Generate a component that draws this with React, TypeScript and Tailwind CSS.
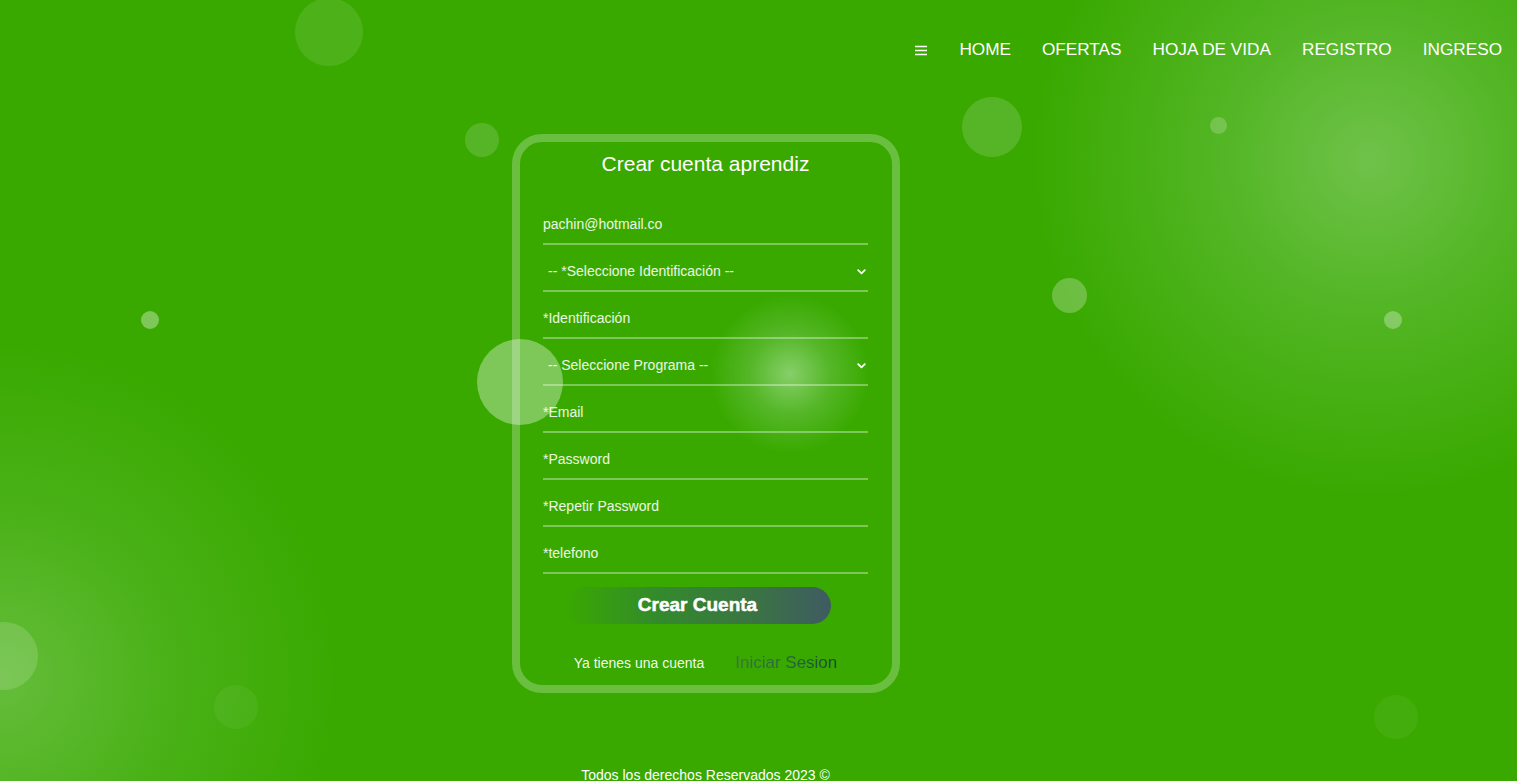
import React from 'react';

const bubbles = [
  'left-[295px] top-[-2px] w-[68px] h-[68px] bg-white/10',
  'left-[465px] top-[123px] w-[34px] h-[34px] bg-white/15',
  'left-[962px] top-[97px] w-[60px] h-[60px] bg-white/15',
  'left-[1210px] top-[117px] w-[17px] h-[17px] bg-white/20',
  'left-[1052px] top-[278px] w-[35px] h-[35px] bg-white/25',
  'left-[141px] top-[311px] w-[18px] h-[18px] bg-white/35',
  'left-[1384px] top-[311px] w-[18px] h-[18px] bg-white/30',
  'left-[477px] top-[339px] w-[86px] h-[86px] bg-white/35',
  'left-[-30px] top-[622px] w-[68px] h-[68px] bg-white/15',
  'left-[214px] top-[685px] w-[44px] h-[44px] bg-white/5',
  'left-[1374px] top-[695px] w-[44px] h-[44px] bg-white/5',
];

const fields = [
  { kind: 'input', value: 'pachin@hotmail.co' },
  { kind: 'select', label: '-- *Seleccione Identificación --' },
  { kind: 'input', label: '*Identificación' },
  { kind: 'select', label: '-- Seleccione Programa --' },
  { kind: 'input', label: '*Email' },
  { kind: 'input', label: '*Password' },
  { kind: 'input', label: '*Repetir Password' },
  { kind: 'input', label: '*telefono' },
];

const Chevron = () => (
  <svg width="9" height="6" viewBox="0 0 9 6" fill="none">
    <path d="M1.2 1.2 L4.5 4.4 L7.8 1.2" stroke="white" strokeWidth="1.8" strokeLinecap="round" strokeLinejoin="round" />
  </svg>
);

export default function App() {
  return (
    <div className="relative min-h-[781px] w-full overflow-hidden bg-[#39a900] font-['Liberation_Sans',Arial,sans-serif] text-white">
      {/* background glows */}
      <div className="pointer-events-none absolute left-[1030px] top-[-180px] h-[680px] w-[680px] rounded-full bg-[radial-gradient(circle_at_center,rgba(135,205,105,0.7)_0%,rgba(110,195,75,0.5)_30%,rgba(57,169,0,0)_70%)]" />
      <div className="pointer-events-none absolute left-[-340px] top-[340px] h-[680px] w-[680px] rounded-full bg-[radial-gradient(circle_at_center,rgba(125,200,90,0.65)_0%,rgba(100,190,60,0.4)_35%,rgba(57,169,0,0)_70%)]" />
      {bubbles.map((b) => (
        <div key={b} className={`pointer-events-none absolute rounded-full ${b}`} />
      ))}

      <header className="relative flex h-[100px] items-center justify-end gap-[31px] pr-[15px] text-[17.2px]">
        <svg width="12" height="11" viewBox="0 0 12 11" className="mr-[1px]">
          <path d="M0 1.5 H12 M0 5.5 H12 M0 9.5 H12" stroke="white" strokeWidth="1.4" />
        </svg>
        <a className="leading-none">HOME</a>
        <a className="leading-none">OFERTAS</a>
        <a className="leading-none">HOJA DE VIDA</a>
        <a className="leading-none">REGISTRO</a>
        <a className="leading-none">INGRESO</a>
      </header>

      <div className="relative w-[1411px]">
        <div className="relative mx-auto mt-[34px] h-[559px] w-[388px] overflow-hidden rounded-[30px] border-[8px] border-white/25">
          <div className="pointer-events-none absolute left-[190px] top-[152px] h-[160px] w-[160px] rounded-full bg-[radial-gradient(circle_at_center,rgba(160,220,140,0.75)_0%,rgba(120,200,90,0.45)_35%,rgba(57,169,0,0)_70%)]" />
          <div className="relative flex flex-col items-center">
            <h1 className="pt-[8px] text-[21px] leading-[28px]">Crear cuenta aprendiz</h1>
            <div className="mt-[27px] flex w-[325px] flex-col gap-[7px]">
              {fields.map((f, i) =>
                f.kind === 'input' ? (
                  <input
                    key={i}
                    defaultValue={f.value}
                    placeholder={f.label}
                    className="h-[40px] w-full border-b-2 border-white/35 bg-transparent text-[14px] text-white/90 outline-none placeholder:text-white/90"
                  />
                ) : (
                  <div key={i} className="flex h-[40px] w-full items-center justify-between border-b-2 border-white/35 pl-[5px] pr-[2px] pt-[1px] text-[14px] text-white/90">
                    <span>{f.label}</span>
                    <Chevron />
                  </div>
                )
              )}
            </div>
            <button className="ml-[-16px] mt-[13px] h-[37px] w-[266px] rounded-full bg-[linear-gradient(to_right,rgba(57,169,0,0)_0%,#338a2c_35%,#3a7443_70%,#3f5b62_100%)] text-[19px] font-bold text-white [-webkit-text-stroke:0.5px_white]">
              Crear Cuenta
            </button>
            <div className="mt-[29px] flex items-center gap-[31px]">
              <span className="text-[14px] leading-[20px] text-white/95">Ya tienes una cuenta</span>
              <span className="bg-[linear-gradient(to_right,#3c7345,#2a6540_50%,#134c31)] bg-clip-text text-[17px] leading-[20px] text-transparent">
                Iniciar Sesion
              </span>
            </div>
          </div>
        </div>
        <footer className="mt-[74px] text-center text-[14px] leading-[16px]">Todos los derechos Reservados 2023 ©</footer>
      </div>
    </div>
  );
}
